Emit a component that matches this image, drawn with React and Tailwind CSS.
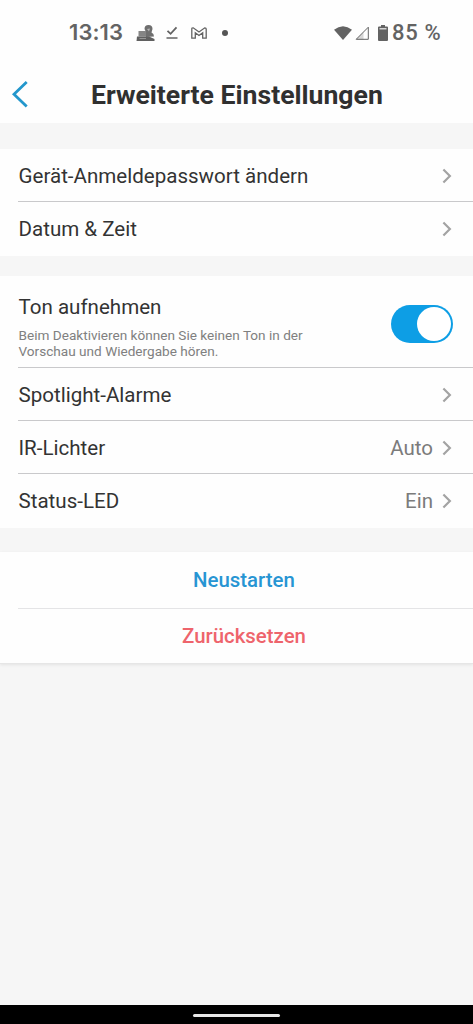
import React from "react";

const CAMERA_ROWS = [
  { label: "Spotlight-Alarme" },
  { label: "IR-Lichter", value: "Auto" },
  { label: "Status-LED", value: "Ein" },
];

const Chevron = () => (
  <svg width="10" height="16" viewBox="0 0 10 16" fill="none" className="shrink-0">
    <path d="M1.4 1.4 L7.9 8 L1.4 14.6" stroke="#a3a3a3" strokeWidth="2.2" />
  </svg>
);

const StatusBar = () => (
  <div className="flex h-[66px] items-center justify-between pb-px pl-[69px] pr-[32px] text-[#636363]">
    <div className="flex items-center">
      <span className="w-[67px] whitespace-nowrap font-['Inter',sans-serif] text-[22px] font-semibold tracking-[0.1px]">
        13:13
      </span>
      <svg width="19" height="18" viewBox="0 0 19 18" className="mr-[11px]">
        <path d="M8.5 5 Q8.5 1 12.5 1 Q16.5 1 16.5 5 L15.5 8.5 Q18 9.5 18 12.5 L10 13 L10 8 Z" fill="#6f6f6f" />
        <path d="M2.5 7 H10 V12.5 H2.5 Z" fill="#858585" />
        <path d="M1 12.5 H13 L18.5 15 V17 H0.5 Z" fill="#606060" />
        <path d="M11 5 L14 4.5 L13 7.5 Z" fill="#b5b5b5" />
        <path d="M3.5 14.5 H10" stroke="#a5a5a5" strokeWidth="0.8" />
      </svg>
      <svg width="12" height="15" viewBox="0 0 12 15" fill="none" stroke="currentColor" className="mr-[13px]">
        <path d="M1.5 5.8 L4.6 8.8 L10.5 2.4" strokeWidth="1.8" />
        <path d="M0.5 13 H11.5" strokeWidth="1.5" />
      </svg>
      <svg width="16" height="12" viewBox="0 0 16 12" fill="none" stroke="currentColor" strokeWidth="1.3" className="mr-[15px]">
        <path d="M0.8 2 Q0.8 0.8 2.2 0.8 L8 5 L13.8 0.8 Q15.2 0.8 15.2 2 V11.2 H11.7 V5.8 L8 8.5 L4.3 5.8 V11.2 H0.8 Z" />
      </svg>
      <span className="size-[6px] rounded-full bg-[#555555]" />
    </div>
    <div className="flex items-center">
      <svg width="18" height="14" viewBox="0 0 18 14" className="mr-[3px]">
        <path d="M0 3.8 Q9 -3.3 18 3.8 L9 14 Z" fill="currentColor" />
      </svg>
      <svg width="14" height="14" viewBox="0 0 14 14" className="mr-[9px]">
        <path d="M1.2 13.3 L13.3 1.2 V13.3 Z" fill="none" stroke="currentColor" strokeWidth="1" />
        <path d="M1 13.5 L8.5 6 V13.5 Z" fill="currentColor" opacity="0.25" />
      </svg>
      <svg width="10" height="16" viewBox="0 0 10 16" className="mr-[4px]">
        <path d="M3 0 H7 V1.5 H9 Q10 1.5 10 2.5 V15 Q10 16 9 16 H1 Q0 16 0 15 V2.5 Q0 1.5 1 1.5 H3 Z" fill="currentColor" />
        <path d="M1.5 3 H8.5 V4.5 H1.5 Z" fill="#d5d5d5" />
      </svg>
      <span className="w-[49px] whitespace-nowrap font-['Roboto',sans-serif] text-[22px] font-medium tracking-[0.7px]">
        85 %
      </span>
    </div>
  </div>
);

const Row = ({ label, value, last = false }) => (
  <div
    className={`ml-[18px] flex items-center justify-between pr-[21px] ${
      last ? "h-[54px]" : "h-[53px] border-b border-[#c9c9cb] pt-px"
    }`}
  >
    <span className="pl-[0.5px] pt-px text-[20.55px] text-[#333333]">{label}</span>
    <div className="flex items-center gap-[9px]">
      {value && <span className="pt-px text-[20.5px] text-[#7b7b7b]">{value}</span>}
      <Chevron />
    </div>
  </div>
);

export default function App() {
  return (
    <div className="flex h-[1024px] w-[473px] flex-col overflow-hidden bg-[#f6f6f6] font-['Roboto',sans-serif]">
      <header className="h-[123px] shrink-0 bg-[#fefefe]">
        <StatusBar />
        <div className="flex h-[57px] items-center pl-[11px]">
          <button type="button" aria-label="Zurück" className="-mt-[2px] w-[80px]">
            <svg width="18" height="28" viewBox="0 0 18 28" fill="none">
              <path d="M15.7 2 L3 14.2 L15.7 26.4" stroke="#2397cc" strokeWidth="2.8" />
            </svg>
          </button>
          <h1 className="whitespace-nowrap text-[26.6px] font-bold text-[#303030]">
            Erweiterte Einstellungen
          </h1>
        </div>
      </header>

      <section className="mt-[26px] shrink-0 bg-[#fefefe]">
        <Row label="Gerät-Anmeldepasswort ändern" />
        <Row label="Datum & Zeit" last />
      </section>

      <section className="mt-[20px] shrink-0 bg-[#fefefe]">
        <div className="ml-[18px] flex h-[92px] items-center justify-between border-b border-[#c9c9cb] pr-[20px]">
          <div className="pl-[0.5px] pt-[8px]">
            <div className="text-[20.55px] leading-[30px] text-[#333333]">Ton aufnehmen</div>
            <p className="mt-[5px] w-[300px] text-[13.6px] leading-[16px] text-[#808080]">
              Beim Deaktivieren können Sie keinen Ton in der
              <br />
              Vorschau und Wiedergabe hören.
            </p>
          </div>
          <button
            type="button"
            role="switch"
            aria-checked="true"
            aria-label="Ton aufnehmen"
            className="mt-[4px] flex h-[38px] w-[62px] items-center justify-end rounded-full bg-[#0d9ee5] pr-[2px]"
          >
            <span className="size-[34px] rounded-full bg-white" />
          </button>
        </div>
        {CAMERA_ROWS.map((row, index) => (
          <Row key={row.label} {...row} last={index === CAMERA_ROWS.length - 1} />
        ))}
      </section>

      <section className="mt-[24px] shrink-0 border-b border-[#e6e6e6] bg-[#fefefe] shadow-[0_1px_3px_rgba(0,0,0,0.08)]">
        <button
          type="button"
          className="ml-[18px] flex h-[57px] w-[455px] items-center justify-center border-b border-[#e4e4e6] pr-[3px] pt-px text-[20.4px] font-medium text-[#2795d3]"
        >
          Neustarten
        </button>
        <button
          type="button"
          className="ml-[18px] flex h-[54px] w-[455px] items-center justify-center pr-[3px] pt-px text-[20.4px] font-medium text-[#ee646c]"
        >
          Zurücksetzen
        </button>
      </section>

      <footer className="mt-auto flex h-[19px] shrink-0 justify-center bg-black pt-[9px]">
        <div className="h-[3px] w-[87px] rounded-full bg-[#e8e8e8]" />
      </footer>
    </div>
  );
}
